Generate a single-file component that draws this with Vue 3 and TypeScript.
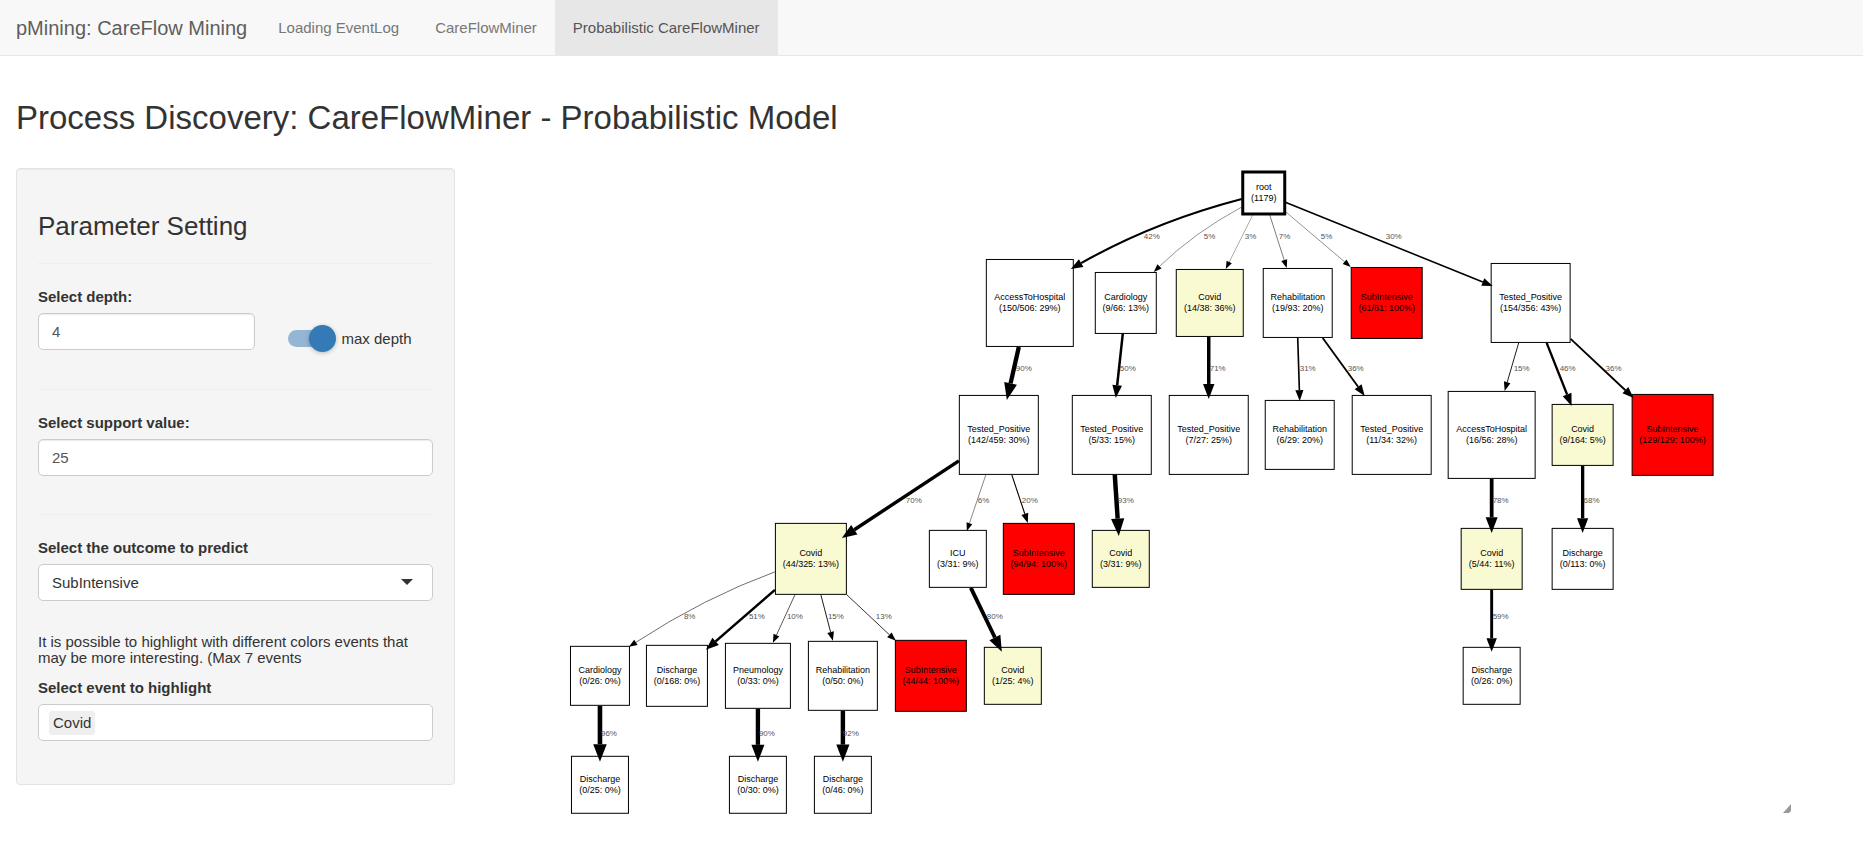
<script setup lang="ts">
import { ref, computed } from 'vue'

type Kind = 'plain' | 'event' | 'outcome' | 'root'

interface FlowNode {
  name: string
  stat: string
  x: number
  y: number
  size: number
  kind: Kind
}

interface FlowEdge {
  pct: number
  from: [number, number]
  to: [number, number]
  label: [number, number]
  bend?: [number, number]
}

const tabs = ['Loading EventLog', 'CareFlowMiner', 'Probabilistic CareFlowMiner']
const activeTab = ref('Probabilistic CareFlowMiner')

const depth = ref('4')
const maxDepth = ref(true)
const support = ref('25')
const outcome = ref('SubIntensive')
const outcomes = ['SubIntensive', 'Discharge', 'Covid', 'ICU']
const highlighted = ref(['Covid'])

const node = (name: string, stat: string, x: number, y: number, size: number, kind: Kind = 'plain'): FlowNode =>
  ({ name, stat, x, y, size, kind })

const nodes: FlowNode[] = [
  node('root', '(1179)', 1264, 192, 42, 'root'),
  node('AccessToHospital', '(150/506: 29%)', 1030, 302, 87),
  node('Cardiology', '(9/66: 13%)', 1126, 302, 61),
  node('Covid', '(14/38: 36%)', 1210, 302, 67, 'event'),
  node('Rehabilitation', '(19/93: 20%)', 1298, 302, 69),
  node('SubIntensive', '(61/61: 100%)', 1387, 302, 71, 'outcome'),
  node('Tested_Positive', '(154/356: 43%)', 1531, 302, 79),
  node('Tested_Positive', '(142/459: 30%)', 999, 434, 79),
  node('Tested_Positive', '(5/33: 15%)', 1112, 434, 79),
  node('Tested_Positive', '(7/27: 25%)', 1209, 434, 79),
  node('Rehabilitation', '(6/29: 20%)', 1300, 434, 69),
  node('Tested_Positive', '(11/34: 32%)', 1392, 434, 79),
  node('AccessToHospital', '(16/56: 28%)', 1492, 434, 87),
  node('Covid', '(9/164: 5%)', 1583, 434, 61, 'event'),
  node('SubIntensive', '(129/129: 100%)', 1673, 434, 81, 'outcome'),
  node('Covid', '(44/325: 13%)', 811, 558, 71, 'event'),
  node('ICU', '(3/31: 9%)', 958, 558, 57),
  node('SubIntensive', '(94/94: 100%)', 1039, 558, 71, 'outcome'),
  node('Covid', '(3/31: 9%)', 1121, 558, 57, 'event'),
  node('Covid', '(5/44: 11%)', 1492, 558, 61, 'event'),
  node('Discharge', '(0/113: 0%)', 1583, 558, 61),
  node('Cardiology', '(0/26: 0%)', 600, 675, 59),
  node('Discharge', '(0/168: 0%)', 677, 675, 61),
  node('Pneumology', '(0/33: 0%)', 758, 675, 65),
  node('Rehabilitation', '(0/50: 0%)', 843, 675, 69),
  node('SubIntensive', '(44/44: 100%)', 931, 675, 71, 'outcome'),
  node('Covid', '(1/25: 4%)', 1013, 675, 57, 'event'),
  node('Discharge', '(0/26: 0%)', 1492, 675, 57),
  node('Discharge', '(0/25: 0%)', 600, 784, 57),
  node('Discharge', '(0/30: 0%)', 758, 784, 57),
  node('Discharge', '(0/46: 0%)', 843, 784, 57),
]

const edges: FlowEdge[] = [
  { pct: 42, from: [1242, 198], to: [1071, 268], label: [1144, 238], bend: [1154, 221] },
  { pct: 5, from: [1242, 206], to: [1154, 271], label: [1204, 238], bend: [1194, 232] },
  { pct: 3, from: [1253, 214], to: [1226, 268], label: [1245, 238] },
  { pct: 7, from: [1270, 214], to: [1287, 267], label: [1279, 238] },
  { pct: 5, from: [1285, 210], to: [1351, 266], label: [1321, 238] },
  { pct: 30, from: [1285, 201], to: [1493, 285], label: [1386, 238] },
  { pct: 90, from: [1019, 346], to: [1007, 399], label: [1016, 370] },
  { pct: 50, from: [1123, 333], to: [1116, 397], label: [1120, 370] },
  { pct: 71, from: [1209, 336], to: [1209, 398], label: [1210, 370] },
  { pct: 31, from: [1298, 337], to: [1300, 400], label: [1300, 370] },
  { pct: 36, from: [1323, 337], to: [1365, 395], label: [1348, 370] },
  { pct: 15, from: [1519, 342], to: [1505, 390], label: [1514, 370] },
  { pct: 46, from: [1547, 342], to: [1572, 405], label: [1560, 370] },
  { pct: 36, from: [1571, 338], to: [1634, 397], label: [1606, 370] },
  { pct: 70, from: [959, 460], to: [842, 537], label: [906, 502] },
  { pct: 6, from: [986, 474], to: [967, 530], label: [978, 502] },
  { pct: 20, from: [1012, 474], to: [1028, 522], label: [1022, 502] },
  { pct: 93, from: [1115, 474], to: [1119, 535], label: [1118, 502] },
  { pct: 78, from: [1492, 478], to: [1492, 532], label: [1493, 502] },
  { pct: 68, from: [1583, 465], to: [1583, 532], label: [1584, 502] },
  { pct: 8, from: [775, 571], to: [629, 646], label: [684, 618], bend: [704, 597] },
  { pct: 51, from: [775, 589], to: [706, 649], label: [749, 618] },
  { pct: 10, from: [795, 594], to: [773, 642], label: [787, 618] },
  { pct: 15, from: [821, 594], to: [833, 640], label: [828, 618] },
  { pct: 13, from: [847, 594], to: [896, 640], label: [876, 618] },
  { pct: 80, from: [971, 587], to: [1002, 651], label: [987, 618] },
  { pct: 59, from: [1492, 589], to: [1492, 651], label: [1493, 618] },
  { pct: 96, from: [600, 705], to: [600, 761], label: [601, 735] },
  { pct: 90, from: [758, 708], to: [758, 761], label: [759, 735] },
  { pct: 92, from: [843, 710], to: [843, 761], label: [843, 735] },
]

// Line weight and arrow head both grow with the transition probability.
const drawnEdges = computed(() =>
  edges.map((e) => {
    const width = 0.2 + 0.046 * e.pct
    const length = 7 + 2.3 * width
    const half = 2.6 + 0.9 * width
    const [tx, ty] = e.to
    const [ox, oy] = e.bend ?? e.from
    const dist = Math.hypot(tx - ox, ty - oy)
    const ux = (tx - ox) / dist
    const uy = (ty - oy) / dist
    const bx = tx - ux * length
    const by = ty - uy * length
    const line = e.bend
      ? `M${e.from[0]} ${e.from[1]} Q${e.bend[0]} ${e.bend[1]} ${bx} ${by}`
      : `M${e.from[0]} ${e.from[1]} L${bx} ${by}`
    const head = `${tx},${ty} ${bx - uy * half},${by + ux * half} ${bx + uy * half},${by - ux * half}`
    return { ...e, width, line, head }
  }),
)
</script>

<template>
  <div class="page">
    <nav class="navbar">
      <a class="brand" href="#">pMining: CareFlow Mining</a>
      <a
        v-for="tab in tabs"
        :key="tab"
        href="#"
        class="tab"
        :class="{ active: tab === activeTab }"
        @click.prevent="activeTab = tab"
      >{{ tab }}</a>
    </nav>

    <main class="content">
      <h2 class="title">Process Discovery: CareFlowMiner - Probabilistic Model</h2>

      <div class="row">
        <form class="well" @submit.prevent>
          <h3 class="well-title">Parameter Setting</h3>
          <hr />
          <div class="depth-row">
            <div class="group depth">
              <label for="depth">Select depth:</label>
              <input id="depth" v-model="depth" class="control" type="text" />
            </div>
            <label class="switch">
              <input v-model="maxDepth" type="checkbox" />
              <span>max depth</span>
            </label>
          </div>
          <hr />
          <div class="group">
            <label for="support">Select support value:</label>
            <input id="support" v-model="support" class="control" type="text" />
          </div>
          <hr />
          <div class="group">
            <label for="outcome">Select the outcome to predict</label>
            <div class="select-wrap">
              <select id="outcome" v-model="outcome" class="control dark">
                <option v-for="o in outcomes" :key="o">{{ o }}</option>
              </select>
              <span class="caret"></span>
            </div>
          </div>
          <p class="hint">It is possible to highlight with different colors events that may be more interesting. (Max 7 events</p>
          <div class="group">
            <label for="highlight">Select event to highlight</label>
            <div class="control tags">
              <span v-for="h in highlighted" :key="h" class="tag">{{ h }}</span>
              <input id="highlight" type="text" />
            </div>
          </div>
        </form>

        <section class="graph">
          <svg class="tree" viewBox="487 167 1304 648" role="img" aria-label="Probabilistic care flow tree">
            <g v-for="(e, i) in drawnEdges" :key="'e' + i">
              <path class="edge" :d="e.line" :stroke-width="e.width" />
            </g>
            <g v-for="(n, i) in nodes" :key="'n' + i" class="node" :class="n.kind">
              <rect :x="n.x - n.size / 2" :y="n.y - n.size / 2" :width="n.size" :height="n.size" />
              <text :x="n.x" :y="n.y - 3">{{ n.name }}</text>
              <text :x="n.x" :y="n.y + 8">{{ n.stat }}</text>
            </g>
            <g v-for="(e, i) in drawnEdges" :key="'h' + i">
              <polygon :points="e.head" />
              <text class="pct" :x="e.label[0]" :y="e.label[1]">{{ e.pct }}%</text>
            </g>
          </svg>
          <svg class="grip" viewBox="0 0 8 9" aria-hidden="true">
            <path d="M0 9 L8 0 V7 L6 9 Z" />
          </svg>
        </section>
      </div>
    </main>
  </div>
</template>

<style>
body {
  margin: 0;
  background: #fff;
}
</style>

<style scoped>
.page,
.page * {
  box-sizing: border-box;
}

.page {
  font-family: "Liberation Sans", Arial, Helvetica, sans-serif;
  font-size: 15px;
  line-height: 22px;
  color: #333;
}

.navbar {
  display: flex;
  height: 56px;
  background: #f8f8f8;
  border-bottom: 1px solid #e7e7e7;
}

.navbar a {
  display: flex;
  align-items: center;
  color: #777;
  text-decoration: none;
  white-space: nowrap;
}

.navbar .brand {
  padding: 0 13px 0 16px;
  font-size: 20px;
  color: #5e5e5e;
}

.navbar .tab {
  padding: 0 18px;
}

.navbar .tab.active {
  background: #e7e7e7;
  color: #555;
}

.content {
  padding: 44px 16px 0;
}

.title {
  margin: 0 0 32px;
  font-size: 33px;
  line-height: 36px;
  font-weight: 400;
}

.row {
  display: flex;
  align-items: flex-start;
  gap: 32px;
}

.well {
  flex: 0 0 24%;
  padding: 43px 21px;
  background: #f5f5f5;
  border: 1px solid #e3e3e3;
  border-radius: 4px;
  box-shadow: inset 0 1px 1px rgba(0, 0, 0, 0.05);
}

.well-title {
  margin: 0 0 23px;
  font-size: 26px;
  line-height: 28px;
  font-weight: 400;
}

hr {
  margin: 22px 0;
  border: 0;
  border-top: 1px solid #eee;
}

.group > label {
  display: block;
  margin-bottom: 5px;
  font-weight: 700;
}

.group + hr {
  margin-top: 38px;
}

.depth-row + hr {
  margin-top: 37px;
}

.control {
  display: block;
  width: 100%;
  height: 37px;
  padding: 0 13px;
  font: inherit;
  color: #555;
  background: #fff;
  border: 1px solid #ccc;
  border-radius: 5px;
  box-shadow: inset 0 1px 1px rgba(0, 0, 0, 0.08);
  outline: none;
}

.control.dark {
  color: #333;
  appearance: none;
  box-shadow: none;
}

.depth-row {
  display: flex;
  align-items: flex-start;
  gap: 33px;
}

.depth {
  flex: 0 0 55%;
}

.switch {
  display: flex;
  align-items: center;
  gap: 5px;
  height: 27px;
  margin-top: 39px;
  white-space: nowrap;
}

.switch input {
  display: grid;
  align-items: center;
  width: 48px;
  height: 27px;
  margin: 0;
  appearance: none;
}

.switch input::before,
.switch input::after {
  content: "";
  grid-area: 1 / 1;
}

.switch input::before {
  width: 44px;
  height: 17px;
  border-radius: 9px;
  background: #ccc;
}

.switch input::after {
  width: 27px;
  height: 27px;
  border-radius: 50%;
  background: #fff;
  box-shadow: 0 1px 4px rgba(0, 0, 0, 0.25);
}

.switch input:checked::before {
  background: #94b5d3;
}

.switch input:checked::after {
  justify-self: end;
  background: #337ab7;
}

.select-wrap {
  position: relative;
}

.caret {
  position: absolute;
  right: 20px;
  top: 15px;
  border: 6px solid transparent;
  border-top-color: #333;
  border-bottom: 0;
  pointer-events: none;
}

.hint {
  margin: 33px 0 11px;
  line-height: 16px;
}

.tags {
  display: flex;
  align-items: center;
  padding: 0 10px;
  box-shadow: none;
}

.tag {
  padding: 1px 4px;
  color: #333;
  background: #efefef;
  border-radius: 3px;
}

.tags input {
  flex: 1;
  min-width: 0;
  border: 0;
  outline: none;
  background: none;
  font: inherit;
}

.graph {
  position: relative;
  flex: 1;
  min-width: 0;
  margin-right: 56px;
}

.tree {
  display: block;
  width: 100%;
}

.grip {
  position: absolute;
  right: 0;
  bottom: 3px;
  width: 8px;
  height: 9px;
  fill: #999;
}

.edge {
  fill: none;
  stroke: #000;
}

.node rect {
  fill: #fff;
  stroke: #000;
}

.node.root rect {
  stroke-width: 3px;
}

.node.event rect {
  fill: #fafad2;
}

.node.outcome rect {
  fill: #f00;
}

.node text {
  font-size: 9px;
  fill: #000;
  text-anchor: middle;
}

.pct {
  font-size: 8px;
  fill: #555;
}
</style>
